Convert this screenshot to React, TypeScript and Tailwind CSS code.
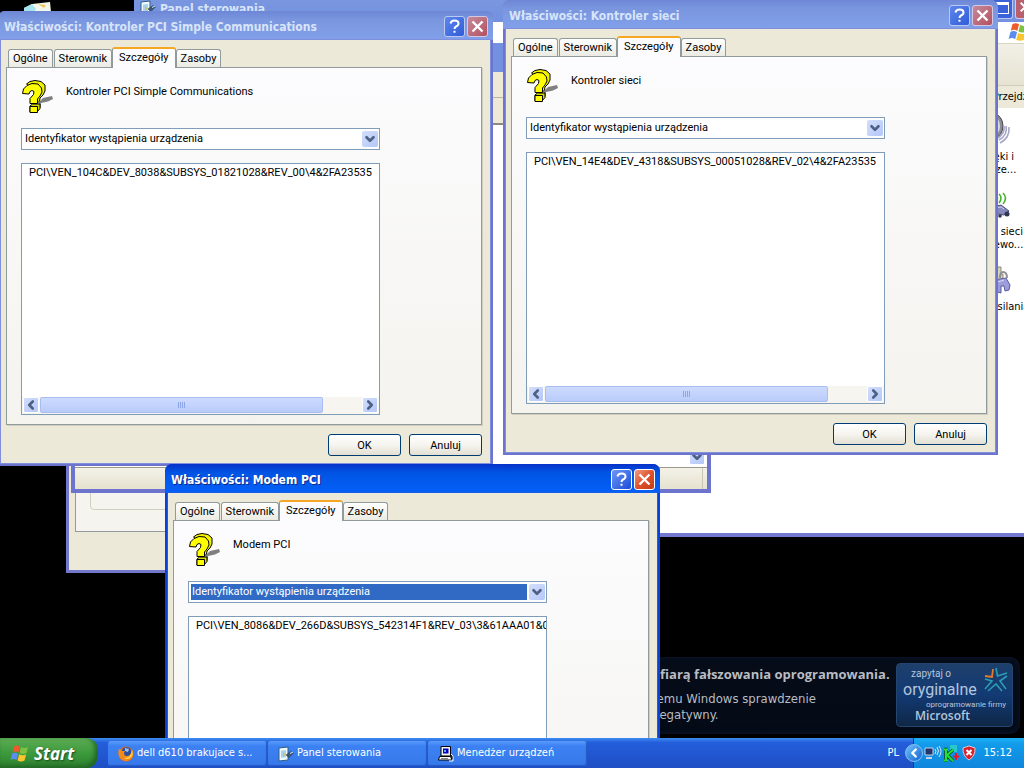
import { useId } from 'react';
import { ChevronDown, ChevronLeft, ChevronRight } from 'lucide-react';
import clsx from 'clsx';

const tabs = ['Ogólne', 'Sterownik', 'Szczegóły', 'Zasoby'];

interface PropertiesWindowProps {
  title: string;
  device: string;
  deviceId: string;
  active?: boolean;
  className: string;
}

function WindowsFlag({ className }: { className?: string }) {
  return (
    <svg viewBox="0 0 20 18" className={className} aria-hidden="true">
      <path d="M4 2 Q7 0 10 2 L8.500 8 Q5.500 6 2.500 8Z" fill="#f0592b" />
      <path d="M11 2.500 Q14 4.500 18 2.500 L16.500 8.500 Q13 10.500 9.500 8.500Z" fill="#7fc241" />
      <path d="M2.200 9 Q5.200 7.200 8.200 9.200 L6.500 15.500 Q3.500 13.500 .5 15.500Z" fill="#5b8df0" />
      <path d="M9.200 9.800 Q13 11.800 16.200 9.800 L14.500 16 Q11 18 7.500 16Z" fill="#fbc62d" />
    </svg>
  );
}

function QuestionIcon() {
  return (
    <svg viewBox="0 0 32 34" className="h-[34px] w-8 shrink-0 overflow-visible" aria-hidden="true">
      <path d="M18 23 L22 19 L31 17 L32 20 L27 22.500 L20 24 L20 28 L15.500 32Z" fill="#808080" />
      <path
        d="M5.500 5 L9 2.500 L14 1.500 L20 2.500 L24 6 L24 12 L22 16 L19 19 L18.500 22 L16 24.500 L14 12Z"
        fill="#f2f200"
        stroke="#000"
      />
      <path d="M9 27 L11.500 25 L19 25 L19 29.500 L16 33 L9 33Z" fill="#d6d600" stroke="#000" />
      <path
        d="M1.500 14.500 L2.500 10 L6 6.500 L11 4.500 L17 5 L20.500 9 L21 13 L19 17 L16.500 20 L16.500 24.500 L9 24.500 L9 19.500 L12.500 15.500 L13 12.500 L11 11.500 L9 12.500 L8 15Z"
        fill="#ffff00"
        stroke="#000"
      />
      <path d="M9 27.500 H16.500 V33.500 H9Z" fill="#ffff00" stroke="#000" />
    </svg>
  );
}

function PanelIcon() {
  return (
    <svg viewBox="0 0 16 16" className="size-4 shrink-0" aria-hidden="true">
      <path d="M1 2 L10 1 V14 L1 15Z" fill="#f3fafd" stroke="#2c5f86" />
      <path d="M3 4.500 L8 4 V11 L3 12Z" fill="#a5d5ee" />
      <path d="M5 6 L7.500 8.500 L5 11Z" fill="#e2b94e" />
      <path d="M8 9 L13 5.500 L15.500 7 L11 11.500Z" fill="#3a5a78" stroke="#20384e" strokeWidth=".5" />
      <path d="M12 7.500 L15 6" stroke="#dcebf5" />
    </svg>
  );
}

function FirefoxIcon() {
  return (
    <svg viewBox="0 0 16 16" className="size-4 shrink-0" aria-hidden="true">
      <circle cx="8" cy="8" r="7.500" fill="#e8681a" />
      <circle cx="8.500" cy="6" r="4.800" fill="#2d4f9e" />
      <path d="M7 2 L11 3 L10 6 L7 5Z" fill="#9cc3ee" />
      <path d="M1 3 Q3 3 4 5 L7 5 L6 7 Q6 10 9 10 Q12 10 13 7 L14 3 Q17 9 13 13 Q8 17 3 13 Q-1 9 1 3Z" fill="#f38b1c" />
      <path d="M14 4 Q16 9 12 12 Q9 14 6 12 Q11 12 13 8Z" fill="#fcd04b" />
    </svg>
  );
}

function ComputerIcon() {
  return (
    <svg viewBox="0 0 16 16" className="size-4 shrink-0" aria-hidden="true">
      <path d="M3 .5 H12.500 V10 H3Z" fill="#f4f2ea" stroke="#000" />
      <path d="M5 2.500 H10.500 V7.500 H5Z" fill="#0000c0" />
      <path d="M6 4 H8 V6 H6Z" fill="#6fa8ff" />
      <path d="M1.500 10.500 H12.500 L14 14 H.5Z" fill="#fff" stroke="#000" />
      <path d="M3 12.500 H10" stroke="#808080" />
      <path d="M13 8 L15 10 V15 L11 15" stroke="#fff" fill="none" />
      <path d="M13 9 L14 11 L14 13" stroke="#000" fill="none" />
    </svg>
  );
}

function CaptionButton({ kind, active }: { kind: 'help' | 'close'; active?: boolean }) {
  const background =
    kind === 'help'
      ? active
        ? 'bg-linear-to-br from-[#6f97f5] to-[#1c49d8] border-white'
        : 'bg-linear-to-br from-[#5f86ec] to-[#2f5bd8] border-[#b9c9f2]'
      : active
        ? 'bg-linear-to-br from-[#f09a80] via-[#e0512c] to-[#c43c12] border-white'
        : 'bg-linear-to-br from-[#c58a9c] to-[#b25060] border-[#d5c8e4]';

  return (
    <button
      type="button"
      aria-label={kind === 'help' ? 'Pomoc' : 'Zamknij'}
      className={clsx('flex size-[21px] items-center justify-center rounded-[3px] border', background)}
    >
      {kind === 'help' ? (
        <svg viewBox="0 0 19 19" className="size-[19px]" aria-hidden="true">
          <path
            d="M5.500 6.500 Q6 3.500 9.500 3.500 Q13.500 3.500 13.500 6.500 Q13.500 8.500 11 9.500 Q9.500 10.300 9.500 12 M9.500 13.800 V15.800"
            fill="none"
            stroke="#fff"
            strokeWidth="2"
          />
        </svg>
      ) : (
        <svg viewBox="0 0 19 19" className="size-[19px]" aria-hidden="true">
          <path d="M4.500 4.500 L14.500 14.500 M14.500 4.500 L4.500 14.500" stroke="#fff" strokeWidth="2.400" />
        </svg>
      )}
    </button>
  );
}

function ScrollButton({ direction }: { direction: 'left' | 'right' | 'down' }) {
  const Icon = { left: ChevronLeft, right: ChevronRight, down: ChevronDown }[direction];
  const label = { left: 'Przewiń w lewo', right: 'Przewiń w prawo', down: 'Przewiń w dół' }[direction];

  return (
    <button
      type="button"
      aria-label={label}
      className="flex size-4 shrink-0 items-center justify-center rounded-[2px] border border-white bg-linear-to-br from-[#d3defc] to-[#b4c7f7]"
    >
      <Icon className="size-3.5 shrink-0 text-[#4d6185]" strokeWidth={4.500} />
    </button>
  );
}

function DialogButton({ children }: { children: string }) {
  return (
    <button
      type="button"
      className="h-[22px] w-[73px] rounded-[3px] border border-[#003c74] bg-linear-to-b from-white via-[#f5f4ef] to-[#e3dfd3] text-[11px] leading-none text-black"
    >
      {children}
    </button>
  );
}

function PropertiesWindow({ title, device, deviceId, active, className }: PropertiesWindowProps) {
  const selectId = useId();

  return (
    <section
      className={clsx(
        'absolute w-[495px] overflow-hidden rounded-t-[7px]',
        active ? 'bg-[#0842d6]' : 'bg-[#6d74cd]',
        className
      )}
    >
      {/* Title bar */}
      <header
        className={clsx(
          'flex h-[29px] items-center justify-between pt-0.5 pr-[5px] pl-1.5',
          active
            ? 'bg-linear-to-b from-[#0831c9] from-0% via-[#0054e3] via-30% to-[#0560f8]'
            : 'bg-linear-to-b from-[#6e87d6] from-0% via-[#7a96df] via-30% to-[#82a0ea]'
        )}
      >
        <h2
          className={clsx(
            "font-['DejaVu_Sans_Condensed',sans-serif] text-xs font-bold whitespace-nowrap",
            active ? 'text-white [text-shadow:1px_1px_#0a2a8a]' : 'text-[#d8e4f8]'
          )}
        >
          {title}
        </h2>
        <div className="flex gap-0.5">
          <CaptionButton kind="help" active={active} />
          <CaptionButton kind="close" active={active} />
        </div>
      </header>

      <div
        className={clsx(
          'mx-[3px] mb-[3px] bg-[#ece9d8] pt-[7px] pr-2 pb-[7px] pl-[5px]',
          active ? 'shadow-[0_0_0_1px_#1660e8]' : 'shadow-[0_0_0_1px_#7f8fde]'
        )}
      >
        {/* Tabs */}
        <div className="flex h-5 items-end pl-0.5" role="tablist">
          {tabs.map((tab) => {
            const selected = tab === 'Szczegóły';
            return (
              <button
                key={tab}
                type="button"
                role="tab"
                aria-selected={selected}
                className={clsx(
                  'rounded-t-[3px] border border-[#919b9c] text-[11px] whitespace-nowrap',
                  selected
                    ? 'relative -mb-px -ml-px h-[21px] border-t-2 border-b-0 border-t-[#f5a623] bg-[#fcfcfe] px-1.5 pb-0.5 leading-4'
                    : 'mr-px h-[18px] border-b-0 bg-linear-to-b from-white to-[#ebebe4] px-1 leading-4'
                )}
              >
                {tab}
              </button>
            );
          })}
        </div>

        {/* Tab page */}
        <div className="border border-[#919b9c] bg-linear-to-b from-[#fcfcfe] to-[#f4f3ee] px-3.5 pt-[11px] pb-[9px] shadow-[1px_1px_#d0cebf]">
          <div className="flex h-[49px] gap-[13px]">
            <QuestionIcon />
            <label htmlFor={selectId} className="pt-[5px] text-[11px] leading-4">
              {device}
            </label>
          </div>

          <div className="flex h-[22px] w-[359px] border border-[#7f9db9] bg-white p-0.5 pr-px">
            <select
              id={selectId}
              className={clsx(
                'mr-0.5 min-w-0 flex-1 appearance-none pl-px text-[11px] leading-4 outline-none',
                active ? 'bg-[#316ac5] text-white' : 'bg-white text-black'
              )}
            >
              <option>Identyfikator wystąpienia urządzenia</option>
            </select>
            <span className="flex w-4 items-center justify-center rounded-[2px] bg-linear-to-br from-[#d3defc] to-[#b4c7f7]">
              <ChevronDown className="size-3.5 shrink-0 text-[#4d6185]" strokeWidth={4.500} />
            </span>
          </div>

          <div className="mt-[13px] flex h-[252px] w-[359px] flex-col justify-between overflow-hidden border border-[#7f9db9] bg-white">
            <p className="pt-px pl-[7px] text-[11px] leading-4 whitespace-nowrap">{deviceId}</p>
            <div className="flex justify-between bg-[#f6f5f0] px-px pb-px">
              <ScrollButton direction="left" />
              <div className="flex-1">
                <div className="ml-px flex h-4 w-[283px] items-center justify-center gap-px rounded-[2px] border border-[#a9bdf0] bg-linear-to-b from-[#cddbff] to-[#b9cbfa]">
                  {[0, 1, 2, 3].map((grip) => (
                    <span key={grip} className="h-1.5 w-px bg-[#8ca6e8]" />
                  ))}
                </div>
              </div>
              <ScrollButton direction="right" />
            </div>
          </div>
        </div>

        <div className="mt-[9px] flex justify-end gap-2">
          <DialogButton>OK</DialogButton>
          <DialogButton>Anuluj</DialogButton>
        </div>
      </div>
    </section>
  );
}

function SpeakerIcon() {
  return (
    <svg viewBox="0 0 32 32" className="size-8 overflow-visible" aria-hidden="true">
      <ellipse cx="18" cy="15" rx="9" ry="12" fill="#8c8c94" stroke="#44444c" />
      <ellipse cx="17" cy="15" rx="7" ry="10" fill="#d8d8e0" />
      <path d="M28 15 Q29 22 22 27 M30 15 Q32 24 23 29 M33 16 Q34 27 24 32" fill="none" stroke="#a6a6c8" strokeWidth="1.600" />
    </svg>
  );
}

function WirelessIcon() {
  return (
    <svg viewBox="0 0 32 32" className="size-8 overflow-visible" aria-hidden="true">
      <path d="M20 9 Q23 12 20 16 M23 8 Q27 12 23 17 M27 7 Q32 12 27 18" fill="none" stroke="#45b32c" strokeWidth="1.600" />
      <path d="M16 21 L25 19 L33 25 L28 29 L16 27Z" fill="#8589bb" stroke="#4b4e78" />
      <path d="M18 22 L25 21 L28 23" fill="none" stroke="#d2d4ee" />
      <circle cx="31" cy="28" r="2.500" fill="#33364f" />
      <circle cx="24" cy="30" r="1.800" fill="#33364f" />
    </svg>
  );
}

function PowerIcon() {
  return (
    <svg viewBox="0 0 32 32" className="size-8 overflow-visible" aria-hidden="true">
      <path d="M17 6 H25 V13 H27 V20 H16Z" fill="#d6d2b4" stroke="#8d8a78" />
      <path d="M24 17 Q24 11 27 11 Q31 11 31 17" fill="none" stroke="#8f8f9a" strokeWidth="2" />
      <path d="M18 19 L30 17 L34 24 L33 29 L29 30 L28 25 L25 25 L25 32 L21 31 L18 27Z" fill="#9c9ddd" stroke="#5b5c9a" />
      <path d="M22 21 L28 19" stroke="#dcdcf6" />
    </svg>
  );
}

const panelItems = [
  { lines: ['Dźwięki i', 'urządze...'], Icon: SpeakerIcon },
  { lines: ['Kreator sieci', 'bezprzewo...'], Icon: WirelessIcon },
  { lines: ['Opcje zasilania'], Icon: PowerIcon },
];

function ControlPanelWindow() {
  return (
    <section className="absolute top-0 -right-4 left-[134px] flex h-[537px] flex-col bg-[#7378d0] pb-1 font-['DejaVu_Sans_Condensed',sans-serif]">
      <header className="flex h-[22px] shrink-0 justify-between bg-linear-to-b from-[#7a96df] to-[#7391e0] pl-1.5">
        <div className="flex gap-1">
          <PanelIcon />
          <h2 className="text-xs leading-[18px] font-bold text-[#d8e4f8]">Panel sterowania</h2>
        </div>
        <div className="flex gap-0.5 pr-1">
          <button type="button" aria-label="Maksymalizuj" className="h-[19px] w-[21px] rounded-b-[3px] border border-t-0 border-[#b9c9f2] bg-[#3a62da] px-[3px] pb-0.5">
            <span className="block h-3 border border-t-[3px] border-white" />
          </button>
          <button type="button" aria-label="Zamknij" className="h-[19px] w-[21px] rounded-b-[3px] border border-t-0 border-[#d5c8e4] bg-[#b9606f]">
            <svg viewBox="0 0 19 19" className="size-[18px]" aria-hidden="true">
              <path d="M5 3 L14 12 M14 3 L5 12" stroke="#fff" strokeWidth="2.200" />
            </svg>
          </button>
        </div>
      </header>
      <div className="flex h-[22px] shrink-0 justify-end border-b border-[#d8d4c4] bg-white pr-2.5">
        <WindowsFlag className="h-5 w-[22px]" />
      </div>
      <div className="h-[41px] shrink-0 bg-linear-to-b from-[#f2f0e6] to-[#e6e3d2]" />
      <div className="flex h-[23px] shrink-0 items-center justify-end border-t border-[#cfccbb] bg-[#ece9d8] pr-3 text-[11px]">
        Przejdź
      </div>
      <ul className="flex flex-1 flex-col items-end bg-white pt-[3px]">
        {panelItems.map(({ lines, Icon }) => (
          <li key={lines[0]} className="flex h-[75px] w-24 flex-col items-center text-[11px] leading-[13px]">
            <Icon />
            <span className="mt-[7px] text-center whitespace-nowrap">
              {lines.map((line) => (
                <span key={line} className="block">
                  {line}
                </span>
              ))}
            </span>
          </li>
        ))}
      </ul>
    </section>
  );
}

function DeviceManagerWindow() {
  return (
    <section className="absolute top-[43px] left-[71px] flex h-[450px] w-[640px] flex-col bg-[#6d74cd] px-1 pb-1">
      <header className="-mx-1 h-[29px] shrink-0 bg-[#7391e0]" />
      <div className="h-[26px] shrink-0 border-b border-[#b8b5a4] bg-[#ece9d8]" />
      <div className="h-[27px] shrink-0 border-b-2 border-[#8d8b80] bg-[#ece9d8]" />
      <div className="flex flex-1 flex-col items-end justify-end bg-white pr-0.5 pb-0.5">
        <ScrollButton direction="down" />
      </div>
      <footer className="h-[22px] shrink-0 border-t border-[#9d9a8a] bg-linear-to-b from-[#f4f2e9] to-[#e6e2cf] pr-1">
        <div className="h-full border-r border-[#c9c5b2]" />
      </footer>
    </section>
  );
}

function SystemPropertiesWindow() {
  return (
    <section className="absolute top-[100px] left-[66px] flex h-[473px] w-[400px] flex-col bg-[#7378cb] px-[3px] pb-[3px]">
      <div className="flex flex-1 flex-col bg-[#ece9d8] px-1.5 pt-6 pb-[38px]">
        <div className="flex-1 border border-[#919b9c] bg-[#f5f4ef] px-3.5 pb-[21px]">
          <div className="h-full rounded-[4px] border border-[#d0d0bf]" />
        </div>
      </div>
    </section>
  );
}

function GenuineNotice() {
  return (
    <aside className="absolute right-1 bottom-1 flex h-[77px] w-[404px] justify-between rounded-[10px] bg-linear-to-b from-[#060c18] to-[#040a16] pt-1.5 pr-[7px] pl-9 text-[#b9bcc2] shadow-[inset_0_0_6px_#0c1830]">
      <div className="whitespace-nowrap">
        <h3 className="font-['Open_Sans',sans-serif] text-[13px] leading-[22px] font-bold">
          ofiarą fałszowania oprogramowania.
        </h3>
        <p className="pt-1.5 font-['DejaVu_Sans_Condensed',sans-serif] text-[13px] leading-4">
          temu Windows sprawdzenie
          <br />
          negatywny.
        </p>
      </div>
      <div className="relative h-16 w-[117px] shrink-0 overflow-hidden rounded-[4px] border border-[#24466e] bg-linear-to-b from-[#1d3f6b] via-[#123a74] to-[#0f2747] pl-1.5 font-['Roboto',sans-serif] whitespace-nowrap text-[#b4c6dc]">
        <p className="pt-1 pl-2 text-[10px] leading-3">zapytaj o</p>
        <p className="text-base leading-5">oryginalne</p>
        <p className="pr-1.5 text-right text-[8px] leading-[10px]">oprogramowanie firmy</p>
        <p className="pl-3 font-['Open_Sans',sans-serif] text-xs leading-3 font-semibold">
          Microsoft
        </p>
        <svg viewBox="0 0 28 28" className="absolute top-0.5 right-0.5 size-7" aria-hidden="true">
          <path d="M3 10 L10 11 L11 3" fill="none" stroke="#e07b2c" strokeWidth="1.800" />
          <path
            d="M14 2 L15.500 10 L25 7 M25 10 L18 15 L24 23 M20 25 L14 18 L6 25 M3 23 L10 15 L3 13"
            fill="none"
            stroke="#2a9cb4"
            strokeWidth="1.600"
          />
        </svg>
      </div>
    </aside>
  );
}

const tasks = [
  { label: 'dell d610 brakujace s...', Icon: FirefoxIcon },
  { label: 'Panel sterowania', Icon: PanelIcon },
  { label: 'Menedżer urządzeń', Icon: ComputerIcon },
];

function Taskbar() {
  return (
    <footer className="flex h-[30px] shrink-0 bg-linear-to-b from-[#3f8cf3] from-0% via-[#245edb] via-15% to-[#1f4fc4] font-['DejaVu_Sans_Condensed',sans-serif] text-[11px] text-white">
      <button
        type="button"
        className="flex w-[98px] items-center gap-1 rounded-r-[12px] bg-linear-to-b from-[#5eac56] via-[#3c9a3c] to-[#2f7f30] pl-2.5 shadow-[inset_-3px_-2px_5px_#1f6423]"
      >
        <WindowsFlag className="h-[19px] w-5" />
        <span className="font-['Open_Sans',sans-serif] text-[17px] leading-none font-bold italic [text-shadow:1px_1px_2px_#1c4a1c]">
          Start
        </span>
      </button>

      <nav className="ml-2.5 flex min-w-0 flex-1 gap-px pt-[3px] pb-0.5">
        {tasks.map(({ label, Icon }) => (
          <button
            key={label}
            type="button"
            className="flex w-[159px] min-w-0 items-center gap-[3px] rounded-[3px] bg-linear-to-b from-[#5b9bfb] from-0% via-[#3c81f3] via-20% to-[#3678ea] pl-2.5 shadow-[inset_-1px_-1px_1px_#2459c4]"
          >
            <Icon />
            <span className="truncate">{label}</span>
          </button>
        ))}
      </nav>

      <span className="self-center pr-1.5">PL</span>
      <div className="relative flex w-[119px] items-center">
        <div className="ml-2 flex h-full flex-1 items-center justify-between border-l border-[#0a3f9e] bg-linear-to-b from-[#1cb0f6] from-0% via-[#129bea] via-20% to-[#0f86dd] pr-3 pl-2.5">
          <div className="flex items-center gap-0.5">
            <svg viewBox="0 0 18 16" className="h-4 w-[18px]" aria-hidden="true">
              <path d="M1 3 H9 V10 H1Z" fill="#23356b" stroke="#c3d0ea" />
              <path d="M2 12 H8 V14 H2Z" fill="#c8d2e4" />
              <path d="M11 4 Q13 6 11 9 M13 2 Q16 6 13 10 M15 1 Q19 6 15 12" fill="none" stroke="#d5e8fb" />
            </svg>
            <svg viewBox="0 0 16 18" className="h-[18px] w-4" aria-hidden="true">
              <path d="M6 1 H13 V8 H6Z" fill="#28c7c9" />
              <path d="M2 5 V17 M0 5.500 H4 M0 16.500 H4 M9 6 L3 11 L9 17" fill="none" stroke="#0b4e12" strokeWidth="3.500" />
              <path d="M2 5 V17 M0 5.500 H4 M0 16.500 H4 M9 6 L3 11 L9 17" fill="none" stroke="#25e03a" strokeWidth="2" />
              <path d="M12 9 V16 M9 12.500 H15" stroke="#e2182a" strokeWidth="2" />
            </svg>
            <svg viewBox="0 0 14 16" className="h-4 w-3.5" aria-hidden="true">
              <path d="M7 1 L13 3 Q13.500 11 7 15 Q.5 11 1 3Z" fill="#d8202c" stroke="#e3c8cf" />
              <path d="M4.500 5 L9.500 10 M9.500 5 L4.500 10" stroke="#fff" strokeWidth="2" />
            </svg>
          </div>
          <time className="whitespace-nowrap">15:12</time>
        </div>
        <button
          type="button"
          aria-label="Pokaż ukryte ikony"
          className="absolute left-0 flex size-[18px] items-center justify-center rounded-full border border-[#7fc1f5] bg-linear-to-br from-[#6fc0f8] to-[#1263cf]"
        >
          <ChevronLeft className="size-3.5 text-white" strokeWidth={4} />
        </button>
      </div>
    </footer>
  );
}

export default function App() {
  return (
    <div className="flex h-screen flex-col overflow-hidden bg-black font-['Roboto',sans-serif] text-black">
      <main className="relative flex-1 overflow-hidden">
        <svg viewBox="0 0 28 12" className="absolute top-0 left-6 h-3 w-7" aria-hidden="true">
          <path d="M0 8 L8 4 L26 2 L27 12 H0Z" fill="#f3f7ea" />
          <path d="M0 8 L8 4 L12 9 L10 12 H0Z" fill="#a5e3ee" />
          <path d="M14 4 L22 5 L20 8Z" fill="#efc65a" />
        </svg>

        <GenuineNotice />
        <ControlPanelWindow />
        <SystemPropertiesWindow />
        <DeviceManagerWindow />

        <PropertiesWindow
          title="Właściwości: Kontroler PCI Simple Communications"
          device="Kontroler PCI Simple Communications"
          deviceId="PCI\VEN_104C&DEV_8038&SUBSYS_01821028&REV_00\4&2FA23535"
          className="top-[11px] -left-0.5"
        />
        <PropertiesWindow
          title="Właściwości: Kontroler sieci"
          device="Kontroler sieci"
          deviceId="PCI\VEN_14E4&DEV_4318&SUBSYS_00051028&REV_02\4&2FA23535"
          className="top-0 left-[503px]"
        />
        <PropertiesWindow
          title="Właściwości: Modem PCI"
          device="Modem PCI"
          deviceId="PCI\VEN_8086&DEV_266D&SUBSYS_542314F1&REV_03\3&61AAA01&0&F3"
          active
          className="top-[464px] left-[165px]"
        />
      </main>
      <Taskbar />
    </div>
  );
}
